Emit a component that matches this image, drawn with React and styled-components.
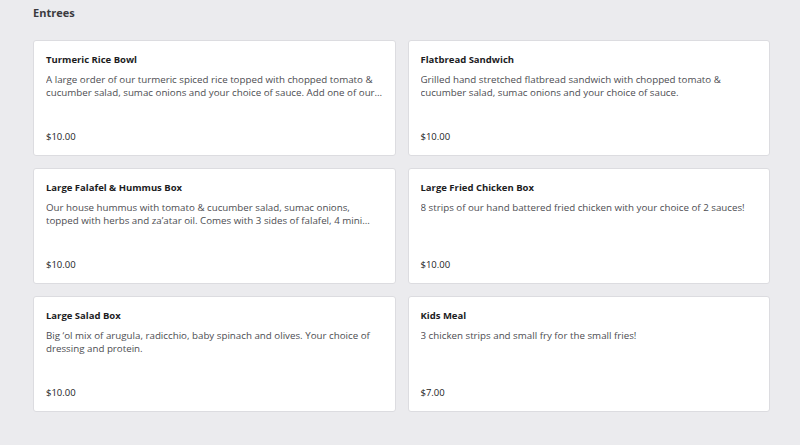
import React from 'react'
import styled, { createGlobalStyle } from 'styled-components'

const GlobalStyle = createGlobalStyle`
  html, body {
    margin: 0;
    background: #ebebee;
    font-family: "Open Sans", Lato, "Liberation Sans", sans-serif;
  }
`

const Page = styled.main`
  padding: 5px 30px 30px 33px;
`

const SectionTitle = styled.h2`
  margin: 0 0 20px;
  font-size: 11px;
  font-weight: 700;
  line-height: 15px;
  color: #3a3a3e;
`

const Grid = styled.div`
  display: grid;
  grid-template-columns: 1fr 1fr;
  gap: 12px;
`

const Card = styled.article`
  display: flex;
  flex-direction: column;
  height: 116px;
  box-sizing: border-box;
  padding: 12px 10px 12px 12px;
  background: #fff;
  border: 1px solid #dcdce0;
  border-radius: 3px;
`

const Name = styled.h3`
  margin: 0 0 6px;
  font-size: 9.5px;
  font-weight: 700;
  line-height: 14px;
  color: #1c1c1e;
`

const Description = styled.p`
  margin: 0;
  font-size: 9.75px;
  line-height: 13px;
  color: #4d4d52;
  display: -webkit-box;
  -webkit-line-clamp: 2;
  -webkit-box-orient: vertical;
  overflow: hidden;
`

const Price = styled.span`
  margin-top: auto;
  font-size: 9.5px;
  line-height: 13px;
  color: #1c1c1e;
`

const items = [
  {
    name: 'Turmeric Rice Bowl',
    description:
      'A large order of our turmeric spiced rice topped with chopped tomato & cucumber salad, sumac onions and your choice of sauce. Add one of our proteins to make it a meal.',
    price: '$10.00',
  },
  {
    name: 'Flatbread Sandwich',
    description:
      'Grilled hand stretched flatbread sandwich with chopped tomato & cucumber salad, sumac onions and your choice of sauce.',
    price: '$10.00',
  },
  {
    name: 'Large Falafel & Hummus Box',
    description:
      'Our house hummus with tomato & cucumber salad, sumac onions, topped with herbs and za’atar oil. Comes with 3 sides of falafel, 4 mini pitas and sauces.',
    price: '$10.00',
  },
  {
    name: 'Large Fried Chicken Box',
    description: '8 strips of our hand battered fried chicken with your choice of 2 sauces!',
    price: '$10.00',
  },
  {
    name: 'Large Salad Box',
    description:
      'Big ‘ol mix of arugula, radicchio, baby spinach and olives. Your choice of dressing and protein.',
    price: '$10.00',
  },
  {
    name: 'Kids Meal',
    description: '3 chicken strips and small fry for the small fries!',
    price: '$7.00',
  },
]

const App = () => {
  return (
    <>
      <GlobalStyle />
      <Page>
        <SectionTitle>Entrees</SectionTitle>
        <Grid>
          {items.map((item) => (
            <Card key={item.name}>
              <Name>{item.name}</Name>
              <Description>{item.description}</Description>
              <Price>{item.price}</Price>
            </Card>
          ))}
        </Grid>
      </Page>
    </>
  )
}

export default App
